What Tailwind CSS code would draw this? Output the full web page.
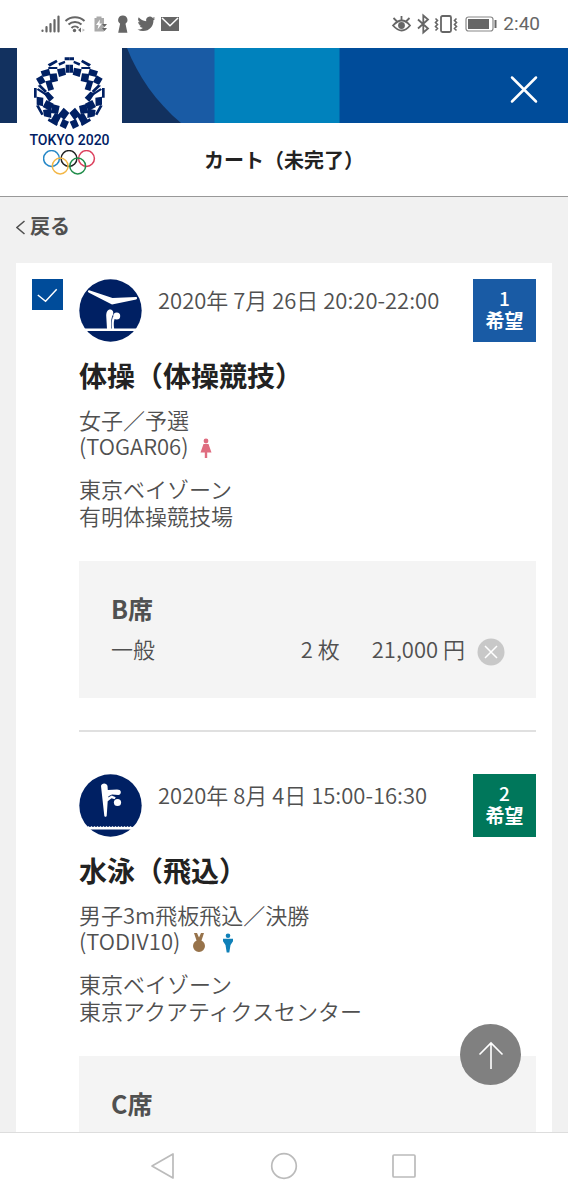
<!DOCTYPE html>
<html lang="ja">
<head>
<meta charset="utf-8">
<meta name="viewport" content="width=device-width, initial-scale=1">
<title>カート（未完了）</title>
<script src="https://cdn.jsdelivr.net/npm/@tailwindcss/browser@4"></script>
</head>
<body class="flex h-screen flex-col overflow-hidden bg-[#f1f1f1] font-['Noto_Sans_CJK_JP',sans-serif] text-[22px] font-[350] leading-[26px] text-[#505050]">

<!-- Status bar -->
<div class="flex h-12 shrink-0 items-center justify-between bg-white pl-10 pr-7 text-[#666]">
  <div class="flex items-center">
    <svg class="h-6 w-36" viewBox="0 0 144 24" fill="none" stroke="currentColor" aria-hidden="true">
      <path d="M2.500 18.500V19M6.500 15V19.500M10.500 12V19.500M14.500 8V19.500M18.500 4.500V19.500" stroke-width="2.200" stroke-linecap="round"/>
      <path d="M25.500 9a14 14 0 0 1 19 0M28.500 12.500a9.500 9.500 0 0 1 13 0M31.500 16a5 5 0 0 1 7 0" stroke-width="2"/>
      <circle cx="34.500" cy="18.500" r="1.700" fill="currentColor" stroke="none"/>
      <path d="M41 15.500v5l-3-2.500z" fill="currentColor" stroke="none"/><path d="M42.500 16.500l2.500 1.500-2.500 1.800z" fill="#bbb" stroke="none"/>
      <path d="M54.500 6h2V4.500h5V6h2.500v13.500h-9.500z" fill="#aaa" stroke="none"/>
      <path d="M60 7.500l-4 5.500h2.500l-1 4.500 4.500-6h-2.500z" fill="#fff" stroke="none"/>
      <path d="M62 12h5l-2.500 3zM62 16h5l-2.500 3z" fill="currentColor" stroke="none"/>
      <path d="M82.800 3.500a4.500 4.500 0 0 1 2.700 8.200l1.900 9.100h-9.200l1.900-9.100a4.500 4.500 0 0 1 2.700-8.200z" fill="currentColor" stroke="none"/>
      <g transform="translate(97.500 3) scale(.74)"><path d="M23.950 4.570a10 10 0 0 1-2.820.770 4.960 4.960 0 0 0 2.160-2.720c-.95.550-2 .950-3.120 1.180a4.920 4.920 0 0 0-8.390 4.480C7.690 8.100 4.070 6.130 1.640 3.160a4.920 4.920 0 0 0 1.520 6.570 4.900 4.900 0 0 1-2.230-.61v.06a4.920 4.920 0 0 0 3.950 4.830 5 5 0 0 1-2.210.08 4.940 4.940 0 0 0 4.600 3.420A9.870 9.870 0 0 1 0 19.540a14 14 0 0 0 7.550 2.210c9.050 0 14-7.500 14-13.980l-.02-.64a9.940 9.940 0 0 0 2.420-2.560z" fill="currentColor" stroke="none"/></g>
      <path d="M121 5h18v14h-18z" fill="currentColor" stroke="none"/>
      <path d="M122 6l8 7.800 8-7.800" stroke="#fff" stroke-width="1.500"/>
    </svg>
  </div>
  <div class="flex items-center gap-1.5">
    <svg class="h-6 w-[106px]" viewBox="0 0 106 24" fill="none" stroke="currentColor" stroke-width="1.800" aria-hidden="true">
      <path d="M2 13.500q9-10 17 0-8 10-17 0z"/><circle cx="10.500" cy="13.500" r="3.400" fill="currentColor" stroke="none"/>
      <path d="M10.500 8.500V4M6 9.500L2.500 6M15 9.500L18.500 6"/>
      <path d="M27 7.500l10 9-4.700 4V3.500l4.700 4-10 9"/>
      <rect x="50" y="4" width="10" height="16" rx="1.500"/>
      <path d="M44.500 6.500l2 2-2 2 2 2-2 2 2 2-2 2M65.500 6.500l-2 2 2 2-2 2 2 2-2 2 2 2" stroke-width="1.600"/>
      <rect x="75" y="5" width="27" height="14" rx="2.500" stroke="#888" stroke-width="1.200"/>
      <rect x="77" y="7" width="21" height="10" fill="currentColor" stroke="none"/>
      <path d="M104.500 8v8" stroke-width="2"/>
    </svg>
    <span class="font-[Roboto,sans-serif] text-[19px] font-normal">2:40</span>
  </div>
</div>

<!-- Site header -->
<header class="relative shrink-0 border-b border-[#999] bg-white">
  <div class="relative flex h-[75px] items-center justify-end overflow-hidden bg-[#004c9a] pr-6">
    <svg class="absolute left-0 top-0 h-full w-[340px]" viewBox="0 0 340 75" preserveAspectRatio="none" aria-hidden="true">
      <path fill="#12315f" d="M0 0h220v75H0z"/>
      <path fill="#195ba5" d="M127 0C138 28 156 54 181 75H216V0z"/>
      <path fill="#0082bd" d="M214.500 0H339.500V75H214.500z"/>
    </svg>
    <button type="button" aria-label="閉じる" class="relative mt-2 p-1 text-white">
      <svg class="size-8" viewBox="0 0 32 32" fill="none" stroke="currentColor" stroke-width="2.500" stroke-linecap="round"><path d="M4 3.500l24 24M28 3.500l-24 24"/></svg>
    </button>
  </div>
  <h1 class="flex h-[73px] items-center justify-center text-xl font-bold text-[#222]">カート（未完了）</h1>
  <a href="#" class="absolute left-[17px] top-0 flex h-32 w-[105px] flex-col items-center bg-white pt-2 text-[#002063]" aria-label="TOKYO 2020">
    <svg class="h-[74px] w-[74px] shrink-0" viewBox="98 35 222 222" fill="currentColor" aria-hidden="true">
      <defs>
        <g id="half">
          <path d="M193 39h14v9h-14zM196 61h11v24h-11z"/>
          <path d="M142 60l26-14 4 7-24 14zM144 68h27v6h-27zM174 57l19-8 2 7-18 8z"/>
          <path d="M170 75l23-5 4 21-21 7zM121 81l25-8 5 19-24 6z"/>
          <path d="M147 89l22-2 4 23-22 5zM107 103l18-10 11 20-18 9z"/>
          <path d="M135 111l17-4 9 28-17 5zM112 124l9-3 19 19-6 5z"/>
          <path d="M101 131h8v29h-8zM109 136l5-4 27 17-3 6z"/>
          <path d="M130 147l14-5 17 18-14 13zM109 157l20 3-1 26-19-5z"/>
          <path d="M138 167l22 11-10 22-23-12zM107 184l8-2 15 28-7 3z"/>
          <path d="M128 197l24-4 1 28-22-5zM156 179l22 6-5 24-22-3z"/>
          <path d="M164 206l20 8-13 24-20-10zM142 229l4-7 27 16-4 7z"/>
          <path d="M190 190l17 16-15 21-19-16zM187 224l19 8-10 22-18-9z"/>
        </g>
      </defs>
      <use href="#half"/>
      <use href="#half" transform="translate(414 0) scale(-1 1)"/>
    </svg>
    <span class="font-[Roboto,sans-serif] text-sm font-medium leading-5 whitespace-nowrap">TOKYO 2020</span>
    <svg class="h-[26px] w-[54px] shrink-0" viewBox="1 1 54 26" fill="none" stroke-width="1.500" aria-hidden="true">
      <circle cx="9.500" cy="9.500" r="7.900" stroke="#2587c7"/><circle cx="27" cy="9.500" r="7.900" stroke="#222"/><circle cx="44.500" cy="9.500" r="7.900" stroke="#dc3f5c"/>
      <circle cx="18.200" cy="17" r="7.900" stroke="#f3b747"/><circle cx="35.700" cy="17" r="7.900" stroke="#208d4a"/>
    </svg>
  </a>
</header>

<main class="min-h-0 flex-1 overflow-y-auto px-4 [scrollbar-width:none]">
  <a href="#" class="flex h-[66px] items-center gap-1 pb-2 text-xl font-bold">
    <svg class="h-5 w-2.5" viewBox="0 0 10 20" fill="none" stroke="currentColor" stroke-width="1.500" aria-hidden="true"><path d="M8.500 5L1 11.500 8.500 18"/></svg>
    戻る
  </a>

  <div class="bg-white p-4">
    <article class="flex gap-4">
      <label class="relative size-[31px] shrink-0 text-white">
        <input type="checkbox" checked aria-label="体操（体操競技）を選択" class="block size-full appearance-none bg-[#004c9a]">
        <svg class="pointer-events-none absolute inset-0 size-full" viewBox="0 0 32 32" fill="none" stroke="currentColor" stroke-width="1.500"><path d="M6 16.500l8 6.500L25.500 10.500"/></svg>
      </label>
      <div class="min-w-0 flex-1">
        <div class="flex items-start gap-4">
          <svg class="size-[63px] shrink-0" viewBox="0 0 63 63" aria-hidden="true">
            <circle cx="31.500" cy="31.500" r="31.200" fill="#002063"/>
            <path d="M9 11.800c.4-.8 1.200-.7 2-.4L33.500 19 57 18c1.500 0 1.500 2 .2 2.400L33 25.500 10 13.800C9 13.200 8.700 12.500 9 11.800z" fill="#fff"/>
            <path d="M5.500 49.500h52l-1 2.400h-50z" fill="#fff"/>
            <path d="M28 50l-.8-13.500c.2-3.500 1.300-6 3.900-6 2.500 0 3.800 2.500 2.900 5-1.500 3-2.200 6-1.900 14.500z" fill="#fff"/>
            <path d="M32.800 50c-.4-6-.2-8 1.200-12.500l2 1.500c-1.200 3-1.500 5-.8 11z" fill="#fff"/>
            <circle cx="37.700" cy="37" r="3.500" fill="#fff"/>
          </svg>
          <time class="flex-1 pt-[7px]" datetime="2020-07-26T20:20">2020年 7月 26日 20:20-22:00</time>
          <div class="flex size-[63px] shrink-0 flex-col items-center justify-center bg-[#195ba5] pb-1 text-[19px] font-bold leading-[22px] text-white"><span class="font-medium">1</span><span>希望</span></div>
        </div>
        <h2 class="mt-[15px] text-[28px] font-bold leading-9 text-[#222]">体操（体操競技）</h2>
        <p class="mt-[13px]">女子／予選</p>
        <p class="flex h-[26px] items-center gap-3">(TOGAR06)
          <svg class="mt-1.5 h-5 w-3" viewBox="0 0 12 20" fill="#df6d80" role="img" aria-label="女子"><circle cx="6" cy="3" r="2.400"/><path d="M3.500 6h5l3 8.500H7.200V20H4.800v-5.500H.5z"/></svg>
        </p>
        <p class="mt-[17px] leading-[27px]">東京ベイゾーン<br>有明体操競技場</p>
        <section class="mt-8 bg-[#f4f4f4] pb-[33px] pl-8 pr-[31px] pt-[31px]">
          <h3 class="text-[25px] font-bold leading-8">B席</h3>
          <div class="mt-[7px] flex h-[34px] items-center">
            <span class="flex-1">一般</span>
            <span class="mr-8">2 枚</span>
            <span class="mr-3">21,000 円</span>
            <button type="button" aria-label="削除" class="mt-2">
              <svg class="size-7" viewBox="0 0 28 28"><circle cx="14" cy="14" r="13.500" fill="#c8c8c8"/><path d="M8 8l12 12M20 8L8 20" stroke="#fff" stroke-width="1.500"/></svg>
            </button>
          </div>
        </section>
        <hr class="mt-8 border-t-2 border-[#e0e0e0]">
      </div>
    </article>

    <article class="mt-[42px] flex pl-[47px]">
      <div class="min-w-0 flex-1">
        <div class="flex items-start gap-4">
          <svg class="size-[63px] shrink-0" viewBox="0 0 63 63" aria-hidden="true">
            <circle cx="31.500" cy="31.500" r="31.200" fill="#002063"/>
            <path d="M22 12c.3-3.500 6-3.500 6.500 0l.3 4 9.200-.5c2.200 0 3.600.7 3.800 2.300.2 2-.8 3.200-2.500 3.200L33 20.500l-3.500 1.800-.3 1.200 3.500-2 4 1.700-1 2-3.200-1-3.800 3-1 14.500c-.2 1.500-2.200 1.500-2.400 0z" fill="#fff"/>
            <circle cx="38.500" cy="28.500" r="3.600" fill="#fff"/>
            <path d="M6.500 52q1.500 2 3 0 1.500 2 3 0 1.500 2 3 0 1.500 2 3 0 1.500 2 3 0 1.500 2 3 0 1.500 2 3 0 1.500 2 3 0 1.500 2 3 0 1.500 2 3 0 1.500 2 3 0 1.500 2 3 0 1.500 2 3 0 1.500 2 3 0 1.500 2 3 0 1.500 2 4 0l-2 3.500h-45z" fill="#fff"/>
          </svg>
          <time class="flex-1 pt-[7px]" datetime="2020-08-04T15:00">2020年 8月 4日 15:00-16:30</time>
          <div class="flex size-[63px] shrink-0 flex-col items-center justify-center bg-[#00775b] pb-1 text-[19px] font-bold leading-[22px] text-white"><span class="font-medium">2</span><span>希望</span></div>
        </div>
        <h2 class="mt-[15px] text-[28px] font-bold leading-9 text-[#222]">水泳（飛込）</h2>
        <p class="mt-[13px]">男子3m飛板飛込／決勝</p>
        <p class="flex h-[26px] items-center">(TODIV10)
          <svg class="ml-3 mt-1.5 h-5 w-3.5" viewBox="0 0 14 20" fill="#97734b" role="img" aria-label="メダル種目"><path d="M2 0h3l2 4.500L9 0h3L9.500 7.500h-5zM7 7a6 6 0 1 1 0 12A6 6 0 0 1 7 7z"/></svg>
          <svg class="ml-4 mt-1.5 h-5 w-3" viewBox="0 0 12 20" fill="#0f80b8" role="img" aria-label="男子"><circle cx="6" cy="2.800" r="2.300"/><path d="M1 5.800h10v2.400L8.500 12 7.300 19.500H4.700L3.500 12 1 8.200z"/></svg>
        </p>
        <p class="mt-[17px] leading-[27px]">東京ベイゾーン<br>東京アクアティクスセンター</p>
        <section class="mt-8 bg-[#f4f4f4] pb-[33px] pl-8 pr-[31px] pt-[31px]">
          <h3 class="text-[25px] font-bold leading-8">C席</h3>
        </section>
      </div>
    </article>
  </div>
</main>

<button type="button" aria-label="ページの先頭へ" class="fixed bottom-[115px] right-[47px] flex size-[61px] items-center justify-center rounded-full bg-[#808080] text-white">
  <svg class="size-8" viewBox="0 0 32 32" fill="none" stroke="currentColor" stroke-width="1.600"><path d="M16 30V4M4.500 15.500L16 4l11.500 11.500"/></svg>
</button>

<!-- System navigation -->
<nav class="flex h-[68px] shrink-0 items-center justify-center gap-[92px] border-t border-[#ddd] bg-white pb-0.5 text-[#bbb]">
  <button type="button" aria-label="戻る"><svg class="size-7" viewBox="0 0 28 28" fill="none" stroke="currentColor" stroke-width="1.700" stroke-linejoin="round"><path d="M23 2v24L2 14z"/></svg></button>
  <button type="button" aria-label="ホーム"><svg class="size-7" viewBox="0 0 28 28" fill="none" stroke="currentColor" stroke-width="1.700"><circle cx="14" cy="14" r="12.300"/></svg></button>
  <button type="button" aria-label="履歴"><svg class="size-7" viewBox="0 0 28 28" fill="none" stroke="currentColor" stroke-width="1.700"><rect x="3" y="3" width="22" height="22" rx="1"/></svg></button>
</nav>
</body>
</html>
